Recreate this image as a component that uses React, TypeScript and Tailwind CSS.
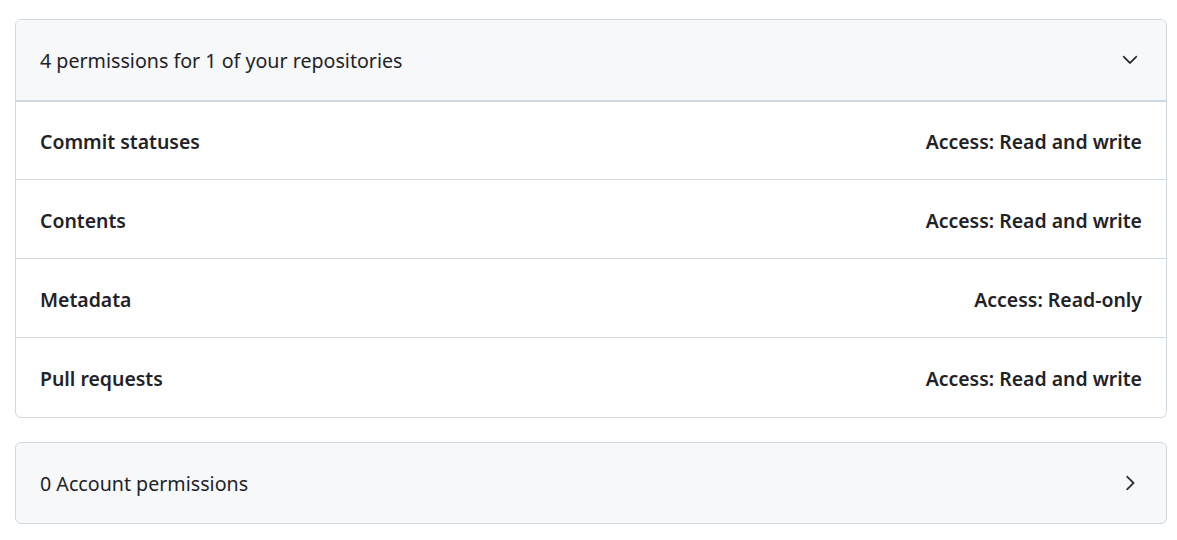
import React from "react";

const rows = [
  ["Commit statuses", "Access: Read and write"],
  ["Contents", "Access: Read and write"],
  ["Metadata", "Access: Read-only"],
  ["Pull requests", "Access: Read and write"],
];

function ChevronDown() {
  return (
    <svg width="24" height="24" viewBox="0 0 24 24" fill="#1f2328" stroke="#1f2328" strokeWidth="0.35">
      <path d="M5.22 8.22a.749.749 0 0 0 0 1.06l6.25 6.25a.749.749 0 0 0 1.06 0l6.25-6.25a.749.749 0 1 0-1.06-1.06L12 13.939 6.28 8.22a.749.749 0 0 0-1.06 0Z" />
    </svg>
  );
}

function ChevronRight() {
  return (
    <svg width="24" height="24" viewBox="0 0 24 24" fill="#1f2328" stroke="#1f2328" strokeWidth="0.35">
      <path d="M8.72 18.78a.75.75 0 0 1 0-1.06L14.44 12 8.72 6.28a.751.751 0 0 1 .018-1.042.751.751 0 0 1 1.042-.018l6.25 6.25a.75.75 0 0 1 0 1.06l-6.25 6.25a.75.75 0 0 1-1.06 0Z" />
    </svg>
  );
}

export default function App() {
  return (
    <div
      className="min-h-[540px] bg-white pt-[19px] pl-[15px] text-[#1f2328]"
      style={{ fontFamily: '"Noto Sans", "Open Sans", sans-serif' }}
    >
      <div className="w-[1152px] flex flex-col gap-[24px]">
        <div className="rounded-[6px] border border-[#d1d9e0] overflow-hidden">
          <div className="h-[81px] bg-[#f6f8fa] border-b border-[#d1d9e0] shadow-[0_1px_0_#d1d9e0] flex items-center justify-between pl-6 pr-6">
            <span className="text-[19.65px] pt-[2px]">4 permissions for 1 of your repositories</span>
            <ChevronDown />
          </div>
          {rows.map(([name, access], i) => (
            <div
              key={name}
              className={
                "h-[79px] flex items-center justify-between px-6 pt-[3px] text-[19.45px] font-semibold " +
                (i < rows.length - 1 ? "border-b border-[#d1d9e0]" : "")
              }
            >
              <span>{name}</span>
              <span>{access}</span>
            </div>
          ))}
        </div>
        <div className="h-[82px] rounded-[6px] border border-[#d1d9e0] bg-[#f6f8fa] flex items-center justify-between px-6">
          <span className="text-[19.65px] pt-[2px]">0 Account permissions</span>
          <ChevronRight />
        </div>
      </div>
    </div>
  );
}
